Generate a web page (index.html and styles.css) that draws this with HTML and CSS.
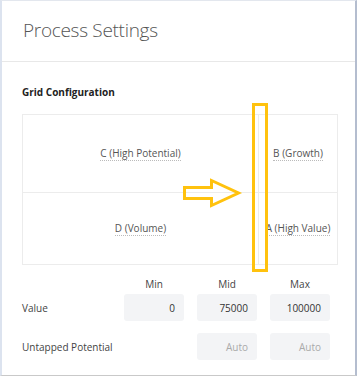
FILE: index.html
```html
<!DOCTYPE html>
<html>
<head>
<meta charset="utf-8">
<link rel="stylesheet" href="styles.css">
</head>
<body>
<div class="modal">
  <div class="modal-header">
    <h1 class="title">Process Settings</h1>
  </div>
  <div class="modal-body">
    <h2 class="section-title">Grid Configuration</h2>
    <div class="grid-box">
      <div class="cell cell-left"><span class="lbl">C (High Potential)</span></div>
      <div class="cell cell-right"><span class="lbl">B (Growth)</span></div>
      <div class="cell cell-left cell-bottom"><span class="lbl">D (Volume)</span></div>
      <div class="cell cell-right cell-bottom"><span class="lbl">A (High Value)</span></div>
    </div>
    <div class="values">
      <div></div>
      <div class="col-head">Min</div>
      <div class="col-head">Mid</div>
      <div class="col-head">Max</div>

      <div class="row-label">Value</div>
      <div class="input">0</div>
      <div class="input">75000</div>
      <div class="input">100000</div>

      <div class="row-label">Untapped Potential</div>
      <div></div>
      <div class="input placeholder">Auto</div>
      <div class="input placeholder">Auto</div>
    </div>
  </div>
  <svg class="annot" width="357" height="378" viewBox="0 0 357 378">
    <rect x="253.5" y="104.5" width="13" height="166" fill="none" stroke="#ffc20e" stroke-width="3"/>
    <path d="M184.5 187.5 L211.5 187.5 L211.5 180.5 L238.5 193 L211.5 205.5 L211.5 198.5 L184.5 198.5 Z" fill="none" stroke="#ffc20e" stroke-width="3" stroke-linejoin="miter"/>
  </svg>
</div>
</body>
</html>
```

FILE: styles.css
```css
html, body {
  margin: 0;
  padding: 0;
}
body {
  width: 357px;
  height: 378px;
  background: #ffffff;
  font-family: "Open Sans", "Noto Sans", sans-serif;
  overflow: hidden;
}
.modal {
  position: relative;
  box-sizing: border-box;
  width: 357px;
  height: 376px;
  background: #fff;
  border-left: 2px solid #dce3ef;
  border-right: 2px solid #b4bdcf;
  border-top: 1px solid #e3e7ee;
  border-bottom: 1px solid #c9c9c9;
}
.modal-header {
  height: 60px;
  border-bottom: 1px solid #e8e8e8;
  display: flex;
  align-items: center;
  padding-left: 21px;
}
.title {
  margin: 0;
  font-size: 19px;
  font-weight: 300;
  color: #555;
  letter-spacing: -0.3px;
  padding-bottom: 2px;
}
.modal-body {
  padding: 22px 17px 0 20px;
}
.section-title {
  margin: 0;
  font-size: 10px;
  font-weight: 700;
  color: #222;
  line-height: 16px;
}
.grid-box {
  margin-top: 14px;
  width: 316px;
  height: 151px;
  box-sizing: border-box;
  border: 1px solid #ececec;
  display: grid;
  grid-template-columns: 236px 1fr;
  grid-template-rows: 77px 1fr;
}
.cell {
  display: flex;
  align-items: center;
  justify-content: center;
  font-size: 10px;
  color: #555;
}
.cell-left {
  border-right: 1px solid #ececec;
}
.cell-bottom {
  border-top: 1px solid #ececec;
}
.lbl {
  border-bottom: 1px dotted #bbb;
  line-height: 13px;
}
.values {
  display: grid;
  grid-template-columns: 89px 60px 60px 60px;
  column-gap: 13px;
  grid-template-rows: 17px 39px 27px;
  margin-top: 12px;
  font-size: 10px;
  color: #444;
  align-items: start;
}
.col-head {
  text-align: center;
  line-height: 14px;
  color: #444;
}
.row-label {
  display: flex;
  align-items: center;
  height: 27px;
  white-space: nowrap;
}
.input {
  box-sizing: border-box;
  height: 27px;
  background: #f3f4f6;
  border-radius: 3px;
  display: flex;
  align-items: center;
  justify-content: flex-end;
  padding-right: 9px;
  color: #333;
}
.placeholder {
  color: #aaa;
}
.annot {
  position: absolute;
  left: -2px;
  top: -1px;
  pointer-events: none;
}
```
